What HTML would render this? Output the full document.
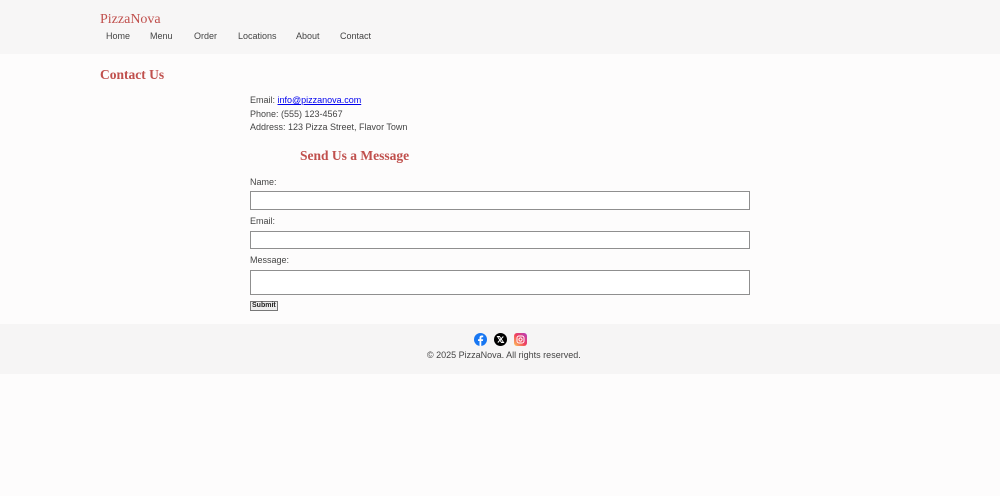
<!DOCTYPE html>
<html><head><style>
body{margin:0;background:#fdfcfc;font-family:"Liberation Sans",sans-serif;font-size:9px;color:#444;width:1000px;height:496px;position:relative;overflow:hidden}
.a{position:absolute;white-space:nowrap}
header{position:absolute;left:0;top:0;width:1000px;height:54px;background:#f7f6f6}
footer{position:absolute;left:0;top:324px;width:1000px;height:50px;background:#f6f5f5}
.logo{font-family:"Liberation Serif",serif;color:#c0504d;font-size:14px}
.h{font-family:"Liberation Serif",serif;color:#c0504d;font-weight:bold;font-size:13.5px}
.in{position:absolute;left:250px;width:498px;border:1px solid #8f8f8f;background:#fff}
a{color:#0000ee}
</style></head><body>
<header>
<div class="a logo" style="left:100px;top:12px">PizzaNova</div>
<div class="a" style="left:106px;top:31px">Home</div>
<div class="a" style="left:150px;top:31px">Menu</div>
<div class="a" style="left:194px;top:31px">Order</div>
<div class="a" style="left:238px;top:31px">Locations</div>
<div class="a" style="left:296px;top:31px">About</div>
<div class="a" style="left:340px;top:31px">Contact</div>
</header>
<div class="a h" style="left:100px;top:67px">Contact Us</div>
<div class="a" style="left:250px;top:95px">Email: <a href="#">info@pizzanova.com</a></div>
<div class="a" style="left:250px;top:109px">Phone: (555) 123-4567</div>
<div class="a" style="left:250px;top:122px">Address: 123 Pizza Street, Flavor Town</div>
<div class="a h" style="left:300px;top:148px">Send Us a Message</div>
<div class="a" style="left:250px;top:177px">Name:</div>
<div class="in" style="top:191px;height:17px"></div>
<div class="a" style="left:250px;top:216px">Email:</div>
<div class="in" style="top:231px;height:16px"></div>
<div class="a" style="left:250px;top:255px">Message:</div>
<div class="in" style="top:270px;height:23px"></div>
<div class="a" style="left:250px;top:301px;border:1px solid #777;background:#eee;font-size:7px;font-weight:bold;padding:0 1px;color:#222;line-height:8px">Submit</div>
<footer>
<svg class="a" style="left:474px;top:9px" width="13" height="13" viewBox="0 0 13 13"><circle cx="6.5" cy="6.5" r="6.5" fill="#1877f2"/><path d="M7.3 13V8h1.6l.3-1.8H7.3V5.1c0-.5.2-.9.9-.9h1V2.6c-.3 0-.8-.1-1.4-.1-1.4 0-2.3.8-2.3 2.3v1.4H4v1.8h1.5V13z" fill="#fff"/></svg>
<svg class="a" style="left:494px;top:9px" width="13" height="13" viewBox="0 0 13 13"><circle cx="6.5" cy="6.5" r="6.5" fill="#000"/><path d="M3.5 3.5h2l4 6h-2zM9.3 3.5L3.8 9.5" stroke="#fff" stroke-width="1" fill="none"/></svg>
<svg class="a" style="left:514px;top:9px" width="13" height="13" viewBox="0 0 13 13"><defs><linearGradient id="g" x1="0" y1="1" x2="1" y2="0"><stop offset="0" stop-color="#fdc75c"/><stop offset=".5" stop-color="#f0405c"/><stop offset="1" stop-color="#b43ec2"/></linearGradient></defs><rect width="13" height="13" rx="3" fill="url(#g)"/><rect x="3" y="3" width="7" height="7" rx="2" fill="none" stroke="#fff" stroke-width="1"/><circle cx="6.5" cy="6.5" r="1.6" fill="none" stroke="#fff" stroke-width="1"/></svg>
<div class="a" style="left:427px;top:26px">© 2025 PizzaNova. All rights reserved.</div>
</footer>
</body></html>
